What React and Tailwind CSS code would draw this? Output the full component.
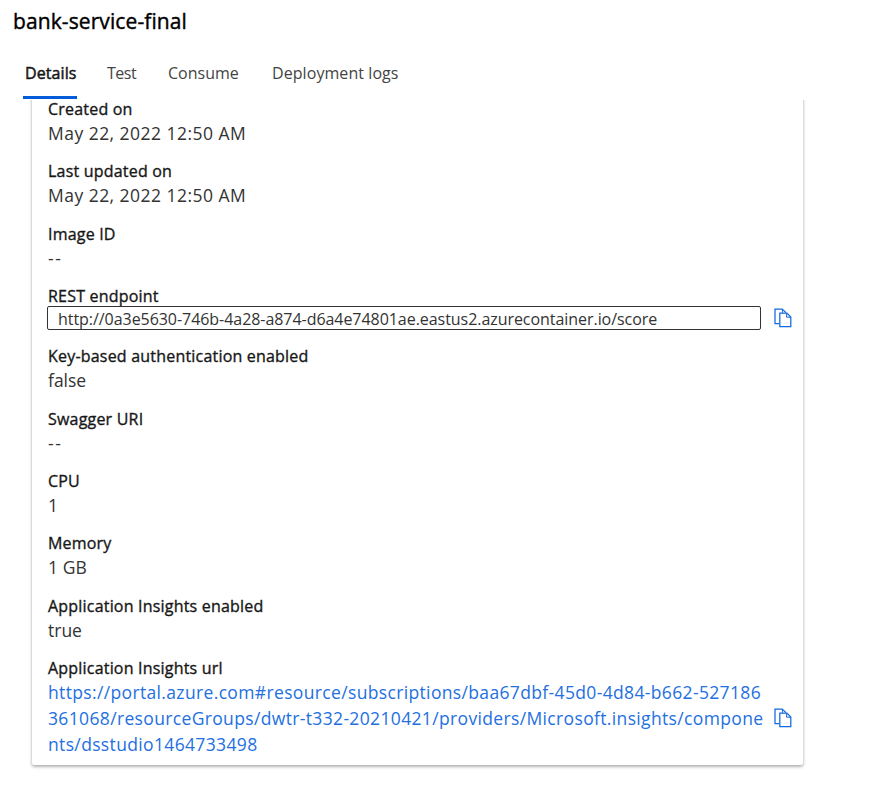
function CopyIcon() {
  return (
    <svg width="18" height="20" viewBox="0 0 18 20" fill="none" stroke="#1568e0" strokeWidth="1.25" className="shrink-0">
      <path d="M5 15.5H1V1h7.2l3.8 3.6" />
      <path d="M5.8 5h7l4 4v9.7H5.8z" />
      <path d="M12.6 5v4.2h4.2M8.4 1v3.8" strokeWidth="1" />
    </svg>
  );
}

function Label({ className = "", children }) {
  return <div className={`h-[23px] text-[16px] leading-[24px] tracking-[0.2px] whitespace-nowrap text-[#171717] [-webkit-text-stroke:0.35px_#171717] ${className}`}>{children}</div>;
}

function Value({ className = "", children }) {
  return <div className={`text-[17.5px] leading-[26px] whitespace-nowrap text-[#333] ${className || "tracking-[0.47px]"}`}>{children}</div>;
}

export default function App() {
  return (
    <div className="h-[789px] w-[895px] overflow-hidden bg-white font-['Open_Sans','Noto_Sans',sans-serif]">
      <h1 className="h-[48px] pt-[7px] pl-[13px] text-[21px] leading-[28px] tracking-[0.1px] whitespace-nowrap text-black [-webkit-text-stroke:0.4px_#000]">
        <span>bank-service-final</span>
      </h1>
      <nav className="flex h-[52px] pl-[23px] text-[16px] leading-[24px] whitespace-nowrap text-[#444]">
        <div className="h-[51px] w-[54px] border-b-3 border-[#015cda] pt-[13px] pl-[2px] text-[#171717] [-webkit-text-stroke:0.5px_#171717]">
          <span className="tracking-[0.1px]">Details</span>
        </div>
        <div className="ml-[30px] w-[61px] pt-[13px] tracking-[-0.5px]"><span>Test</span></div>
        <div className="w-[104px] pt-[13px]"><span>Consume</span></div>
        <div className="pt-[13px] tracking-[0.07px]"><span>Deployment logs</span></div>
      </nav>
      <div className="flow-root pl-[32px]">
        <main className="-mt-[20px] h-[685px] w-[771px] rounded-[2px] bg-white pt-[17px] pl-[16px] shadow-[0_1.6px_3.6px_rgba(0,0,0,0.2),0_0.3px_3px_rgba(0,0,0,0.2)] [clip-path:inset(20px_-10px_-10px_-10px)]">
          <section className="h-[62px]"><Label>Created on</Label><Value>May 22, 2022 12:50 AM</Value></section>
          <section className="h-[63px]"><Label>Last updated on</Label><Value>May 22, 2022 12:50 AM</Value></section>
          <section className="h-[62px]"><Label>Image ID</Label><Value className="tracking-[1.6px]">--</Value></section>
          <section className="h-[60px]">
            <Label className="-mb-px">REST endpoint</Label>
            <div className="-ml-px flex h-[24px] items-center">
              <div className="flex h-[24px] w-[714px] items-center rounded-[2px] border border-[#333] pt-[2px] pl-[10px] text-[16px] tracking-[-0.05px] whitespace-nowrap text-[#333]">
                <span>http://0a3e5630-746b-4a28-a874-d6a4e74801ae.eastus2.azurecontainer.io/score</span>
              </div>
              <div className="ml-[13px]"><CopyIcon /></div>
            </div>
          </section>
          <section className="h-[63px]"><Label>Key-based authentication enabled</Label><Value className="tracking-[0px]">false</Value></section>
          <section className="h-[62px]"><Label>Swagger URI</Label><Value className="tracking-[1.6px]">--</Value></section>
          <section className="h-[62px]"><Label>CPU</Label><Value>1</Value></section>
          <section className="h-[63px]"><Label>Memory</Label><Value className="tracking-[0.1px]">1 GB</Value></section>
          <section className="h-[62px]"><Label>Application Insights enabled</Label><Value className="tracking-[0px]">true</Value></section>
          <section>
            <Label>Application Insights url</Label>
            <div className="flex items-center">
              <a className="block w-[726px] text-[17.5px] leading-[26px] tracking-[0.35px] whitespace-nowrap text-[#2470df]">
                <span>https://portal.azure.com#resource/subscriptions/baa67dbf-45d0-4d84-b662-527186</span><br />
                <span>361068/resourceGroups/dwtr-t332-20210421/providers/Microsoft.insights/compone</span><br />
                <span>nts/dsstudio1464733498</span>
              </a>
              <CopyIcon />
            </div>
          </section>
        </main>
      </div>
    </div>
  );
}
